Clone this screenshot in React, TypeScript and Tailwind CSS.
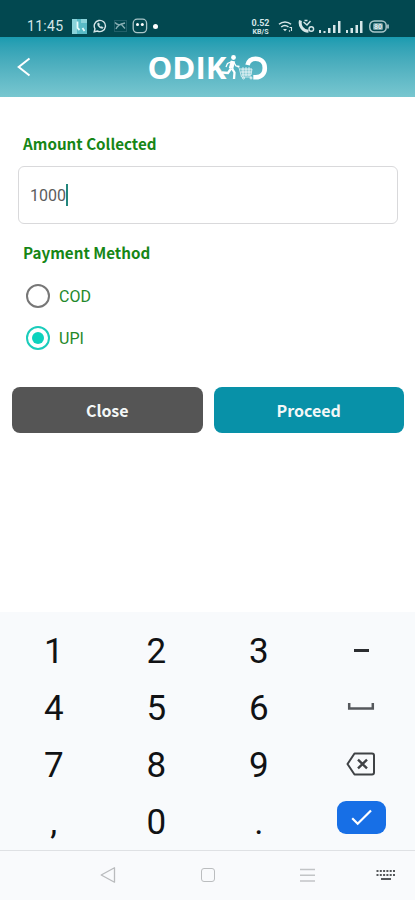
import type { ReactNode } from "react";

function StatusBar() {
  return (
    <div className="h-[37px] bg-[#024850] pl-[27px] pr-[26px] pt-[15px] flex justify-between text-[#d5e6e8]">
      <div className="flex h-[22px] items-center">
        <span className="w-[37px] text-[14px] tracking-[0.3px] whitespace-nowrap">11:45</span>
        <svg className="ml-[8px]" width="15" height="15" viewBox="0 0 15 15">
          <rect width="15" height="15" fill="#58bac6" />
          <path d="M0 0h5v15H0zM9 0h6v4H9z" fill="#8ad3da" />
          <path d="M5.500 2.500v6.500l2 2M10.500 9l2 3" stroke="#e6fbfb" strokeWidth="1.800" fill="none" />
        </svg>
        <svg className="ml-[6px]" width="14" height="14" viewBox="0 0 14 14" fill="none" stroke="currentColor">
          <path d="M1.200 12.800l.8-3A5.600 5.600 0 1 1 4.400 12z" strokeWidth="1.400" />
          <path d="M4.600 4.300c-.5 2.700 2.200 5.400 4.900 5.200l.8-1.100-1.800-1-.8.6-1.600-1.700.6-.8-.8-1.600z" fill="currentColor" strokeWidth=".4" />
        </svg>
        <svg className="ml-[7px]" width="13" height="12" viewBox="0 0 13 12" fill="none" stroke="#87aeb3">
          <rect x=".5" y=".5" width="12" height="11" stroke="#22606a" />
          <path d="M1 2.500c2 2.500 4 2.500 6 1.500l4 4.500M2 9c1-3 4-5 9-6" strokeWidth="1.300" />
        </svg>
        <svg className="ml-[5px]" width="16" height="16" viewBox="0 0 16 16">
          <rect x="1.200" y="1.200" width="13.400" height="13.400" rx="4" fill="none" stroke="#a9c5c8" strokeWidth="1.300" />
          <circle cx="5.500" cy="6.500" r="1.500" fill="#fff" />
          <circle cx="10.300" cy="6.500" r="1.500" fill="#fff" />
        </svg>
        <span className="ml-[5px] size-[5px] rounded-full bg-white" />
      </div>
      <div className="flex h-[22px] items-center">
        <svg className="overflow-visible" width="20" height="15" viewBox="0 0 20 15" fill="currentColor" fontWeight="700">
          <text x="0.500" y="7" fontSize="8.500" textLength="18" lengthAdjust="spacingAndGlyphs">0.52</text>
          <text x="1.500" y="14.500" fontSize="7" textLength="16" lengthAdjust="spacingAndGlyphs">KB/S</text>
        </svg>
        <svg className="ml-[7px]" width="16" height="14" viewBox="0 0 16 14" fill="none" stroke="currentColor" strokeWidth="1.500">
          <path d="M1 5.300c3.500-3.200 8.500-3.200 12 0M3.200 8c2.300-2 5-2 7.300 0" />
          <path d="M5 10h4l-2 2.300z" fill="currentColor" stroke="none" />
          <path d="M11.500 8.500h2v3.500M11 11.500l1 1" strokeWidth="1.100" />
        </svg>
        <svg className="ml-[4px]" width="17" height="14" viewBox="0 0 17 14" fill="none" stroke="currentColor">
          <path d="M2.500 1.500C1 7 5 12 10.500 12.300" strokeWidth="3" />
          <path d="M5.500 3l3.500 3 3.500-4M6.500 1.500h3" strokeWidth="1.400" />
          <circle cx="13.300" cy="10" r="2.300" strokeWidth="1.400" />
        </svg>
        <svg className="ml-[4px]" width="22" height="13" viewBox="0 0 22 13" fill="currentColor">
          <path d="M0 10h2v3H0zM4.500 11h2v2h-2zM9 8h2.500v5H9zM14 5h2.500v8H14zM19 1h2.500v12H19z" />
        </svg>
        <svg className="ml-[5px]" width="17" height="13" viewBox="0 0 17 13" fill="currentColor">
          <path d="M0 10h2v3H0zM4.500 8h2.500v5H4.500zM9.500 5H12v8H9.500zM14 1h2.500v12H14z" />
        </svg>
        <svg className="ml-[6px]" width="20" height="13" viewBox="0 0 20 13">
          <rect x=".8" y="1" width="16.400" height="11" rx="4.500" fill="none" stroke="#a9c7ca" strokeWidth="1.500" />
          <rect x="4" y="3" width="10" height="7" rx="1.500" fill="#6f9da3" />
          <text x="5" y="9" fontSize="7" fontWeight="700" fill="#e3eff0">80</text>
          <path d="M19 4.500v4" stroke="#c4d9db" strokeWidth="1.500" />
        </svg>
      </div>
    </div>
  );
}

function Logo() {
  return (
    <svg className="overflow-visible" width="122" height="44" viewBox="0 -7 122 44" fill="none" stroke="#fff">
      <text x="-0.500" y="25.500" textLength="79" lengthAdjust="spacingAndGlyphs" fontSize="30" fontWeight="700" fill="#fff" stroke="none" className="font-['Open_Sans',sans-serif]">
        ODIK
      </text>
      {/* runner pushing the cart */}
      <circle cx="85.500" cy="4.500" r="2.400" fill="#fff" stroke="none" />
      <path d="M85 8l-2 7.500" strokeWidth="4.500" />
      <path d="M84 8.500l-4.500 2-1.500 3.500M86 9.500l2 3.500 3.500.5" strokeWidth="1.300" />
      <path d="M83 15.500l-3 4.500-6-.5M84 15.500l2.500 4-.5 6.500" strokeWidth="2.300" />
      <path d="M92.500 15.500H104l-1 7H94z" fill="#fff" fillOpacity=".3" stroke="none" />
      <path d="M89 13.500l2 1 2.500 9.500h10M92 16h12l-1 6H93.500M95 14v9M98 14v9M101 14v9M92.500 19H103" strokeWidth=".7" />
      <circle cx="95.500" cy="25" r="1" strokeWidth=".8" />
      <circle cx="103" cy="25" r="1" strokeWidth=".8" />
      <path d="M99.500 12c1-4.200 3.800-6.300 8-6.300 5.500 0 9.300 3.300 9.300 9.200s-3.700 9.300-9 9.300h-2.500" strokeWidth="4.600" />
    </svg>
  );
}

function Radio({ label, checked = false }: { label: string; checked?: boolean }) {
  return (
    <label className="flex h-[42px] items-center gap-[9px] text-[16px] text-[#23882a]">
      <span
        className={
          checked
            ? "flex size-[24px] items-center justify-center rounded-full border-[2.5px] border-[#1bccbb]"
            : "flex size-[24px] items-center justify-center rounded-full border-2 border-[#777]"
        }
      >
        {checked && <span className="size-[12px] rounded-full bg-[#0cd2bd]" />}
      </span>
      <span className="pt-[2px]">{label}</span>
    </label>
  );
}

function Key({ children }: { children: ReactNode }) {
  return <button className="flex h-[57px] items-center justify-center leading-none">{children}</button>;
}

function Keypad() {
  return (
    <div className="grid h-[238px] grid-cols-4 content-start bg-[#f8fafc] px-[2.5px] pt-[11px] text-[35px] text-[#111214]">
      <Key>1</Key>
      <Key>2</Key>
      <Key>3</Key>
      <Key><span className="mb-[2px] h-[2.5px] w-[15px] bg-[#2b2d30]" /></Key>
      <Key>4</Key>
      <Key>5</Key>
      <Key>6</Key>
      <Key>
        <svg className="mb-[3px]" width="28" height="8" viewBox="0 0 28 8" fill="none" stroke="#55585c" strokeWidth="2.500">
          <path d="M2.200 0v5.500h23.600V0" />
        </svg>
      </Key>
      <Key>7</Key>
      <Key>8</Key>
      <Key>9</Key>
      <Key>
        <svg className="mb-[3px]" width="30" height="24" viewBox="0 0 30 24" fill="none" stroke="#3f4245" strokeWidth="2" strokeLinejoin="round">
          <path d="M8.500 1.500h17.500q2 0 2 2v17q0 2-2 2H8.500L1.500 12z" />
          <path d="M12 7.700l9 8.600M21 7.700l-9 8.600" strokeWidth="2.400" />
        </svg>
      </Key>
      <Key>,</Key>
      <Key>0</Key>
      <Key>.</Key>
      <Key>
        <span className="mb-[10px] flex h-[33px] w-[49px] items-center justify-center rounded-[9px] bg-[#176fe6]">
          <svg width="21" height="17" viewBox="0 0 21 17" fill="none" stroke="#fff" strokeWidth="2.200">
            <path d="M1.200 9.300l5.500 5.500L20 1.500" />
          </svg>
        </span>
      </Key>
    </div>
  );
}

function NavBar() {
  return (
    <div className="flex h-[50px] items-center border-t border-[#dfe1e4] bg-[#f9fafc] pb-[1px] pl-[100px]">
      <svg width="16" height="18" viewBox="0 0 16 18" fill="none" stroke="#b9bbbd" strokeWidth="1.300" strokeLinejoin="round">
        <path d="M14.500 1.800v14.400L1.200 9z" />
      </svg>
      <span className="ml-[85px] size-[14px] rounded-[3px] border-[1.500px] border-[#bbbdbf]" />
      <svg className="ml-[85px]" width="15" height="14" viewBox="0 0 15 14" stroke="#c2c4c6" strokeWidth="1.400">
        <path d="M0 1.500h15M0 7.300h15M0 13h15" />
      </svg>
      <svg className="ml-[61px]" width="20" height="12" viewBox="0 0 20 12" stroke="#55575a">
        <path d="M.5 2h19M.5 6h19" strokeWidth="2" strokeDasharray="2 1.300" />
        <path d="M5 10h10" strokeWidth="2" />
      </svg>
    </div>
  );
}

export default function App() {
  return (
    <div className="flex h-[900px] w-[415px] flex-col overflow-hidden bg-white font-['Roboto',sans-serif]">
      <StatusBar />
      <header className="flex h-[60px] items-center bg-linear-to-b from-[#199bb0] to-[#78c7d0] pl-[17px]">
        <svg width="15" height="20" viewBox="0 0 15 20" fill="none" stroke="#fff" strokeWidth="2">
          <path d="M12.500 1.500L1.700 10l10.800 8.500" />
        </svg>
        <div className="ml-[116px] pt-[2px]">
          <Logo />
        </div>
      </header>

      <main className="flex flex-1 flex-col">
        <h2 className="ml-[23px] mt-[34px] text-[15.2px] font-bold leading-[24px] text-[#168616] font-['Noto_Sans_CJK_SC',sans-serif]">
          Amount Collected
        </h2>
        <div className="ml-[18px] mt-[11px] mr-[17px] flex h-[58px] items-center rounded-[6px] border border-[#d9d9db] pl-[11px] text-[16px] text-[#5c5c5c]">
          <span className="pt-[2px]">1000</span>
          <span className="h-[22px] w-[2px] bg-[#23867c]" />
        </div>
        <h2 className="ml-[23px] mt-[16px] text-[15.2px] font-bold leading-[24px] text-[#168616] font-['Noto_Sans_CJK_SC',sans-serif]">
          Payment Method
        </h2>
        <div className="ml-[26px] mt-[11px]">
          <Radio label="COD" />
          <Radio label="UPI" checked />
        </div>
        <div className="mt-[28px] grid grid-cols-2 gap-[11px] pl-[12px] pr-[11px] text-[16px] font-bold text-[#f3f7f7] font-['Noto_Sans_CJK_SC',sans-serif]">
          <button className="h-[46px] rounded-[8px] bg-[#555]">Close</button>
          <button className="h-[46px] rounded-[8px] bg-[#0891a8]">Proceed</button>
        </div>
      </main>

      <Keypad />
      <NavBar />
    </div>
  );
}
